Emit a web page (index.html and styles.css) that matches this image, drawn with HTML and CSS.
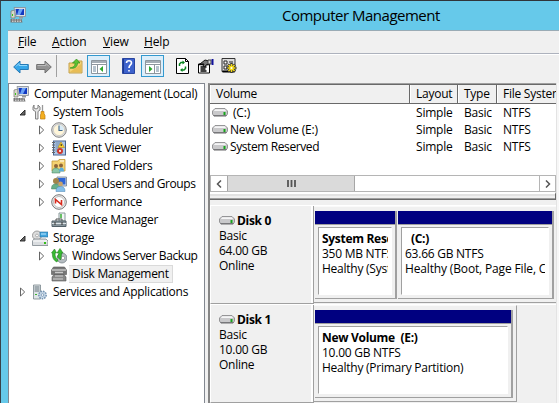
FILE: index.html
```html
<!DOCTYPE html>
<html lang="en">
<head>
<meta charset="utf-8">
<title>Computer Management</title>
<link rel="stylesheet" href="styles.css">
</head>
<body>
<svg class="defs" width="0" height="0">
  <symbol id="computer" viewBox="0 0 16 16">
    <path d="M1 4l4-1v8H1z" fill="#d8d8cc" stroke="#77776f" stroke-width=".7"/>
    <path d="M2 7h1v2H2z" fill="#39c51b"/>
    <path d="M4 .5h11.5v9H6z" fill="#d9dde2" stroke="#858c96" stroke-width=".8"/>
    <path d="M5.5 2H14v6H6.5z" fill="#1238c0"/><path d="M9 2h4l-3 6H7z" fill="#6ba1f5"/>
    <path d="M9 10h4v1.5H9z" fill="#999"/>
    <path d="M.5 12h11l1 3.5H.5z" fill="#777"/><path d="M2 13h9M2 14.5h9" stroke="#ddd" stroke-width=".8" stroke-dasharray="1.5 1"/>
  </symbol>
  <symbol id="tools" viewBox="0 0 16 16">
    <path d="M2 1v3l2 1 2-1V1l2 2v3L6 7.500V15H3.500V7.500L1 6V3z" fill="#e6e6e6" stroke="#777" stroke-width=".9"/>
    <path d="M10.500 1v7" stroke="#999" stroke-width="1.300"/><path d="M9 7.500h3v2l1 2v3.500H8.500V11L9 9.500z" fill="#f4af20" stroke="#bd7d13" stroke-width=".7"/>
  </symbol>
  <symbol id="clock" viewBox="0 0 16 16">
    <circle cx="8" cy="8" r="7.300" fill="#ddd" stroke="#888"/><circle cx="8" cy="8" r="5.600" fill="#fff6da" stroke="#bbb" stroke-width=".6"/>
    <path d="M8 8h5A5 5 0 0 0 8 3z" fill="#d8ebf8"/><path d="M8 3.500V8.500h3.500" fill="none" stroke="#40698f" stroke-width="1.100"/>
  </symbol>
  <symbol id="event" viewBox="0 0 16 16">
    <rect x="2.500" y="1" width="12" height="14" fill="#afc9e9" stroke="#4a6592"/><path d="M4.500 3h5M4.500 5h4M4.500 7h5M4.500 9h3M4.500 11h3" stroke="#506a8b" stroke-width=".7"/>
    <path d="M1 2.500h3M1 5h3M1 7.500h3M1 10h3M1 12.500h3" stroke="#666"/>
    <path d="M10 2l3.500 5.500H7z" fill="#ffd62d" stroke="#b68619" stroke-width=".6"/><path d="M10.200 4v2" stroke="#222"/>
    <circle cx="9" cy="11" r="3" fill="#cf382b"/><circle cx="9" cy="11" r="1.100" fill="#fff"/>
  </symbol>
  <symbol id="shared" viewBox="0 0 16 16">
    <path d="M1 3h6l1-1.500h6V13H1z" fill="#f6d372" stroke="#c39b38" stroke-width=".8"/><path d="M9 3h4" stroke="#fff"/>
    <circle cx="5" cy="8" r="2" fill="#8f6539"/><circle cx="10" cy="7.500" r="2" fill="#8f6539"/>
    <path d="M1 15c0-4 2-5 4-5s4 1 4 5z" fill="#8bc7a7" stroke="#417b5b" stroke-width=".5"/><path d="M8 13.500c0-3 1-4 2.500-4S13 11 13 13.500z" fill="#5bafdd"/>
  </symbol>
  <symbol id="users" viewBox="0 0 16 16">
    <path d="M6 1h9.500v9H6z" fill="#d6dce5" stroke="#707d90" stroke-width=".8"/><path d="M7 2h7.500v6.500H7z" fill="#2e65d6"/>
    <circle cx="5" cy="5" r="3" fill="#a18449"/><path d="M.5 13C.5 9 2 8 5 8s4 1 4 5z" fill="#68af8a" stroke="#447d60" stroke-width=".5"/>
    <circle cx="9.500" cy="8" r="2.400" fill="#c9a46b"/><path d="M5 15.500c0-4 2-5 4.500-5s4.500 1 4.500 5z" fill="#85bfe8" stroke="#4a82b3" stroke-width=".5"/>
  </symbol>
  <symbol id="perf" viewBox="0 0 16 16">
    <circle cx="8" cy="8" r="7.300" fill="#eee" stroke="#777"/><circle cx="8" cy="8" r="5.500" fill="#fff" stroke="#999" stroke-width=".6"/>
    <path d="M4.500 9.500V5.500l6 5V6" fill="none" stroke="#d72b1d" stroke-width="1.600"/>
  </symbol>
  <symbol id="device" viewBox="0 0 16 16">
    <path d="M8 1h6v8H8z" fill="#f2f5f6" stroke="#899"/><path d="M10 2v4" stroke="#37ad32" stroke-width="1.500"/>
    <path d="M5 9V7h6v2" fill="none" stroke="#555"/><path d="M1 9h14v5.500H1z" fill="#87949b" stroke="#526068"/><path d="M1 11.500h14" stroke="#dce3e6"/><path d="M4 10v3M11 10v3" stroke="#333"/>
  </symbol>
  <symbol id="storage" viewBox="0 0 16 16">
    <circle cx="5" cy="5.500" r="4.500" fill="#ddd" stroke="#888" stroke-width=".8"/><circle cx="5" cy="5.500" r="1.400" fill="#fff" stroke="#888" stroke-width=".6"/>
    <path d="M8 2h8v5H8z" fill="#42a6df" stroke="#286f9d" stroke-width=".6"/><path d="M9 4h5" stroke="#bce6ff"/>
    <path d="M2 9h12l2 2v4.500H.5V11z" fill="#d9dcdf" stroke="#7e858b" stroke-width=".8"/><path d="M1 11h14" stroke="#fff"/><path d="M12 12h2v2h-2z" fill="#35bd1a"/>
  </symbol>
  <symbol id="backup" viewBox="0 0 16 16">
    <circle cx="11" cy="10" r="5" fill="#b6bdc2" stroke="#6f7a80" stroke-width=".7"/><circle cx="12" cy="10" r="1.700" fill="#fff" stroke="#777" stroke-width=".5"/>
    <path d="M.5 5L3.500 1l2 4H4c0 4 1 6 3 7l-1 2C2.500 12.500 1 9 1.500 5zM6 5l3-4.500L12 5h-1.500c0 3-.5 5-1 7L6.500 9 8 5z" fill="#38bc32" stroke="#218020" stroke-width=".6"/>
  </symbol>
  <symbol id="diskmgmt" viewBox="0 0 16 16">
    <path d="M2.500 1h11l2 3v4.500H.5V4z" fill="#777" stroke="#555" stroke-width=".6"/><path d="M1 4h14" stroke="#eee"/><path d="M4 6.500h8" stroke="#ccc" stroke-width="1.400"/>
    <path d="M3 8.500h10l2 2.500v4H1v-4z" fill="#888" stroke="#555" stroke-width=".6"/><path d="M4 10h8M2 13h10" stroke="#ddd" stroke-width=".9"/>
  </symbol>
  <symbol id="services" viewBox="0 0 16 16">
    <path d="M1.500 1h7v14h-7z" fill="#dfe5e8" stroke="#79858b" stroke-width=".8"/><path d="M2.500 3h5M2.500 5h5M2.500 7h5" stroke="#65737b"/><path d="M3 10h2v1H3z" fill="#3ab52e"/>
    <circle cx="10.500" cy="11" r="3.700" fill="#c6d7e7" stroke="#7594b2" stroke-width="1.500" stroke-dasharray="1.500 1"/><circle cx="10.500" cy="11" r="1.300" fill="#fff" stroke="#678aaa" stroke-width=".7"/>
  </symbol>
  <symbol id="drive" viewBox="0 0 16 9">
    <path d="M3 .5h10l2.500 2.500v3L14 8.200H2L.5 6V3z" fill="#c9c9cb" stroke="#8c8c8e" stroke-width=".9"/><path d="M3.300 1.200h9.400l1.500 1.800H1.800z" fill="#f5f5f6"/><path d="M1.500 7.500h13" stroke="#77777a"/><path d="M11.500 4h2v3h-2z" fill="#16a51b"/>
  </symbol>
  <symbol id="closed" viewBox="0 0 6 10"><path d="M1 1L5.200 5 1 9z" fill="#fff" stroke="#555" stroke-width=".9"/></symbol>
  <symbol id="open" viewBox="0 0 7 7"><path d="M6 1v5H1z" fill="#666" stroke="#222" stroke-width=".9"/></symbol>
</svg>

<div class="window">
  <header class="titlebar">
    <svg class="app-icon"><use href="#computer"/></svg>
    <h1>Computer Management</h1>
  </header>
  <div class="frame">
    <nav class="menubar">
      <span class="m-file"><u>F</u>ile</span><span class="m-action"><u>A</u>ction</span><span class="m-view"><u>V</u>iew</span><span class="m-help"><u>H</u>elp</span>
    </nav>
    <div class="toolbar">
      <svg class="back" width="16" height="14" viewBox="0 0 16 14"><path d="M.7 7L7 1v3.500h8.300v5H7V13z" fill="#35a6e8" stroke="#2579b5"/><path d="M3 6.500L6 3.500v2h8" fill="none" stroke="#8ed7fc"/></svg>
      <svg class="forward" width="16" height="14" viewBox="0 0 16 14"><path d="M15.300 7L9 1v3.500H.7v5H9V13z" fill="#929292" stroke="#707070"/><path d="M1.500 5.500H10v-2l3 3" fill="none" stroke="#bbb"/></svg>
      <i class="separator"></i>
      <svg class="up" width="15" height="16" viewBox="0 0 15 16"><path d="M1 5h5l1-2h7v12H1z" fill="#f4d477" stroke="#c5a14c"/><path d="M2 14L13 6v8z" fill="#e8bc55"/><path d="M2 10c4-1 5-2 5-5H4.500L8.500 1l3.500 4H9.500c0 4-3 6-7.500 5z" fill="#5ec233" stroke="#34901c" stroke-width=".7"/></svg>
      <span class="toggle t1"><svg width="16" height="14" viewBox="0 0 16 14"><path d="M.5.500h15v13H.5z" fill="#fff" stroke="#8d969e"/><path d="M1 2h14" stroke="#a4adb5" stroke-width="2"/><path d="M1 4.500h14M6.500 4v9" stroke="#8d969e"/><path d="M2 7h3M2 9h3M2 11h3" stroke="#6d879c"/><path d="M12 6v6L8.500 9z" fill="#2ba72c"/></svg></span>
      <svg class="help" width="13" height="16" viewBox="0 0 13 16"><path d="M.5.500h12v15H.5z" fill="#3d62cc" stroke="#2845a0"/><path d="M1.500 1v14" stroke="#1d398e"/><path d="M4.500 5c0-3 5-3 5 0 0 2-2.500 2-2.500 5M7 12v1.500" fill="none" stroke="#fff" stroke-width="1.600"/></svg>
      <span class="toggle t2"><svg width="16" height="14" viewBox="0 0 16 14"><path d="M.5.500h15v13H.5z" fill="#fff" stroke="#8d969e"/><path d="M1 2h14" stroke="#a4adb5" stroke-width="2"/><path d="M1 4.500h14M9.500 4v9" stroke="#8d969e"/><path d="M11 7h3M11 9h3M11 11h3" stroke="#6d879c"/><path d="M4 6v6L7.500 9z" fill="#2ba72c"/></svg></span>
      <svg class="refresh" width="13" height="16" viewBox="0 0 13 16"><path d="M.5.500h9l3 3v12H.5z" fill="#fff" stroke="#000"/><path d="M9.500.500v3h3" fill="none" stroke="#000"/><path d="M3.500 8V6l1.500-1.500h3M9.500 8.500v2L8 12H5" fill="none" stroke="#0a8520" stroke-width="1.500"/><path d="M6.500 2.500v4L9 4.500zM6.500 10v4L4 12z" fill="#0a8520"/></svg>
      <svg class="props" width="16" height="16" viewBox="0 0 16 16"><path d="M.5 6h11v9H.5z" fill="#fff" stroke="#000"/><path d="M1 6.500h10M2.500 9h6M2.500 11h5M2.500 13h6" stroke="#000" stroke-width="1.300"/><path d="M2 6l5-4 4 1 1 3-4 1-1 2-2-1 1-2z" fill="#777" stroke="#111"/><path d="M10 2h3v4h-3z" fill="#ddd" stroke="#444"/><path d="M13.500 1h2v6h-2z" fill="#11119c"/></svg>
      <svg class="settings" width="17" height="16" viewBox="0 0 17 16"><path d="M1 .5h13v13H1z" fill="#ddd" stroke="#333"/><path d="M1.500 13.500h12" stroke="#000" stroke-width="2"/><path d="M3 3h3v3H3zM3 8h3v3H3zM8 4h4" fill="#fff" stroke="#222"/><path d="M10.500 5v10M5.500 10h10M7 6.500l7 7M14 6.500l-7 7" stroke="#333" stroke-width="2.500"/><path d="M10.500 6v8M6.500 10h8M7.500 7l6 6M13.500 7l-6 6" stroke="#f5db18" stroke-width="1.500"/><circle cx="10.500" cy="10" r="1" fill="#fff"/></svg>
    </div>
    <main class="content">
      <aside class="tree">
        <div class="node root"><svg class="ico"><use href="#computer"/></svg><span>Computer Management (Local)</span></div>
        <div class="node l1"><svg class="open"><use href="#open"/></svg><svg class="ico"><use href="#tools"/></svg><span>System Tools</span></div>
        <div class="node l2"><svg class="closed"><use href="#closed"/></svg><svg class="ico"><use href="#clock"/></svg><span>Task Scheduler</span></div>
        <div class="node l2"><svg class="closed"><use href="#closed"/></svg><svg class="ico"><use href="#event"/></svg><span>Event Viewer</span></div>
        <div class="node l2"><svg class="closed"><use href="#closed"/></svg><svg class="ico"><use href="#shared"/></svg><span>Shared Folders</span></div>
        <div class="node l2"><svg class="closed"><use href="#closed"/></svg><svg class="ico"><use href="#users"/></svg><span class="tight">Local Users and Groups</span></div>
        <div class="node l2"><svg class="closed"><use href="#closed"/></svg><svg class="ico"><use href="#perf"/></svg><span>Performance</span></div>
        <div class="node l2 leaf"><svg class="ico"><use href="#device"/></svg><span>Device Manager</span></div>
        <div class="node l1"><svg class="open"><use href="#open"/></svg><svg class="ico"><use href="#storage"/></svg><span>Storage</span></div>
        <div class="node l2"><svg class="closed"><use href="#closed"/></svg><svg class="ico"><use href="#backup"/></svg><span class="tight">Windows Server Backup</span></div>
        <div class="node l2 leaf selected"><svg class="ico"><use href="#diskmgmt"/></svg><span>Disk Management</span></div>
        <div class="node l1"><svg class="closed"><use href="#closed"/></svg><svg class="ico"><use href="#services"/></svg><span>Services and Applications</span></div>
      </aside>
      <section class="details">
        <div class="volumes">
          <div class="vrow head"><span>Volume</span><span>Layout</span><span>Type</span><span>File System</span></div>
          <div class="vrow"><span><svg class="drive"><use href="#drive"/></svg><b class="indent">(C:)</b></span><span>Simple</span><span>Basic</span><span>NTFS</span></div>
          <div class="vrow"><span><svg class="drive"><use href="#drive"/></svg><b>New Volume (E:)</b></span><span>Simple</span><span>Basic</span><span>NTFS</span></div>
          <div class="vrow"><span><svg class="drive"><use href="#drive"/></svg><b class="tight">System Reserved</b></span><span>Simple</span><span>Basic</span><span>NTFS</span></div>
          <div class="scrollbar">
            <i class="sbtn"><svg width="6" height="8" viewBox="0 0 6 8"><path d="M5 .5L1.500 4 5 7.500" fill="none" stroke="#555" stroke-width="1.500"/></svg></i>
            <i class="thumb"><svg width="9" height="7" viewBox="0 0 9 7"><path d="M1 0v7M4.500 0v7M8 0v7" stroke="#555" stroke-width="1.800"/></svg></i>
            <i class="track"></i>
            <i class="sbtn end"><svg width="6" height="8" viewBox="0 0 6 8"><path d="M1 .5L4.500 4 1 7.500" fill="none" stroke="#555" stroke-width="1.500"/></svg></i>
          </div>
        </div>
        <div class="splitter"></div>
        <div class="disks">
          <div class="disk">
            <div class="label"><div class="dname"><svg class="drive"><use href="#drive"/></svg><strong>Disk 0</strong></div><div>Basic</div><div>64.00 GB</div><div>Online</div></div>
            <div class="parts">
              <div class="part reserved-part"><div class="bar"></div><div class="box"><strong>System Rese</strong><span>350 MB NTFS</span><span>Healthy (Syst</span></div></div>
              <div class="part c-part"><div class="bar"></div><div class="box"><strong class="indent2">(C:)</strong><span>63.66 GB NTFS</span><span class="wide">Healthy (Boot, Page File, C</span></div></div>
            </div>
          </div>
          <div class="disk">
            <div class="label"><div class="dname"><svg class="drive"><use href="#drive"/></svg><strong>Disk 1</strong></div><div>Basic</div><div>10.00 GB</div><div>Online</div></div>
            <div class="parts short">
              <div class="part e-part"><div class="bar"></div><div class="box"><strong>New Volume&nbsp; (E:)</strong><span>10.00 GB NTFS</span><span>Healthy (Primary Partition)</span></div></div>
            </div>
          </div>
        </div>
      </section>
      <div class="edge"></div>
    </main>
  </div>
</div>
</body>
</html>
```
FILE: styles.css
```css
* { box-sizing: border-box; }
body { margin: 0; overflow: hidden; font: 12px/18px "Open Sans", "Noto Sans", sans-serif; letter-spacing: -.25px; color: #000; white-space: nowrap; }
svg { display: block; flex: none; }
.defs { position: absolute; }
i { font-style: normal; }
.window { width: 559px; height: 403px; background: #66c9ea; border-top: 1px solid #30343a; border-left: 1px solid #38424a; overflow: hidden; }
.titlebar { height: 29px; display: flex; }
.app-icon { width: 16px; height: 16px; margin: 6px 0 0 9px; }
h1 { margin: 3px 0 0 256px; font-size: 15px; line-height: 22px; font-weight: 400; letter-spacing: -.5px; }
.frame { margin-left: 7px; border-top: 1px solid #9aabb5; background: #f0f0f0; height: 373px; display: flex; flex-direction: column; }
.menubar { height: 23px; padding: 2px 0 0 10px; display: flex; border-bottom: 1px solid #adb2bd; flex: none; letter-spacing: -.15px; }
.menubar u { text-underline-offset: 1px; text-decoration-thickness: 1px; }
.m-file { width: 34px; }
.m-action { width: 51px; }
.m-view { width: 41px; }
.toolbar { height: 29px; border-top: 1px solid #fff; display: flex; flex: none; padding-left: 5px; }
.toolbar > svg { margin-top: 3px; }
.toolbar .back, .toolbar .forward { margin-top: 5px; }
.forward { margin-left: 7px; }
.separator { width: 1px; height: 22px; background: #a0a0a0; margin-left: 4px; }
.up { margin-left: 11px; }
.toggle { width: 23px; height: 22px; border: 1px solid #3399cf; background: #dceefa; padding: 4px 0 0 3px; flex: none; }
.t1 { margin-left: 4px; }
.help { margin-left: 12px; }
.t2 { margin-left: 6px; }
.refresh { margin-left: 12px; }
.props { margin-left: 9px; }
.settings { margin-left: 7px; }
.content { flex: 1; min-height: 0; display: flex; }
.tree { width: 197px; background: #fff; border: 1px solid #828790; border-bottom: 0; padding-top: 1px; flex: none; margin-right: 3px; overflow: hidden; }
.node { height: 18px; display: flex; align-items: center; padding-left: 4px; }
.node span { height: 18px; line-height: 18px; padding: 0 3px; margin-left: 2px; }
.root span { letter-spacing: -.36px; }
.node .tight { letter-spacing: -.42px; }
.vrow .tight { letter-spacing: -.4px; }
.ico { width: 16px; height: 16px; }
.l1 { padding-left: 10px; }
.l2 { padding-left: 29px; }
.open { width: 7px; height: 7px; margin-right: 6px; }
.closed { width: 7px; height: 10px; margin-right: 6px; }
.leaf { padding-left: 42px; }
.selected span { background: #f0f0f0; border: 1px solid #dadada; border-left: 0; line-height: 16px; }
.selected span { letter-spacing: -.3px; }
.details { width: 348px; border-left: 2px solid #858585; border-top: 1px solid #a0a0a0; display: flex; flex-direction: column; flex: none; }
.volumes { height: 108px; border-top: 1px solid #696969; background: #fff; flex: none; letter-spacing: -.2px; }
.vrow { height: 17px; display: grid; grid-template-columns: 200px 48px 39px 1fr; line-height: 17px; }
.vrow span { padding-left: 6px; overflow: hidden; display: flex; align-items: center; }
.vrow span:first-child { padding-left: 2px; }
.vrow b { font-weight: 400; margin-left: 2px; }
.vrow .indent { margin-left: 5px; }
.drive { width: 16px; height: 9px; }
.vrow.head { height: 19px; line-height: 18px; background: #f0f0f0; border-bottom: 1px solid #696969; letter-spacing: -.25px; }
.head span { border-right: 1px solid #696969; border-left: 1px solid #fff; padding-left: 5px; }
.head span:first-child { padding-left: 5px; }
.head span:last-child { border-right: 0; padding-left: 5px; }
.scrollbar { height: 17px; margin-top: 20px; display: flex; border: 1px solid #b5b5b5; background: #fff; }
.scrollbar i { display: flex; align-items: center; justify-content: center; }
.sbtn { width: 16px; }
.thumb { width: 128px; background: #dadada; border: solid #a6a6a6; border-width: 0 1px; }
.track { flex: 1; }
.end { border-left: 1px solid #b5b5b5; }
.splitter { height: 8px; background: #f0f0f0; border: solid #696969; border-width: 0 1px 1px 0; border-top: 2px solid #fff; box-shadow: inset 0 -1px #a0a0a0, inset 0 2px #e2e2e2; flex: none; }
.disks { padding-top: 5px; flex: 1; min-height: 0; overflow: hidden; background: #f0f0f0; line-height: 15px; }
.disk { display: flex; height: 99px; border-top: 1px solid #fff; }
.label { width: 104px; border-left: 1px solid #fff; border-bottom: 1px solid #a0a0a0; padding: 7px 0 0 8px; box-shadow: inset -1px 0 #a0a0a0, inset -3px 0 #fff; }
.dname { display: flex; align-items: center; }
.dname strong { margin-left: 2px; }
strong { letter-spacing: -.3px; }
.parts { flex: 1; display: flex; padding: 4px 2px 3px 1px; gap: 1px; border-top: 1px solid #fafafa; border-bottom: 1px solid #a0a0a0; margin-bottom: 1px; }
.part { border-right: 2px solid #a0a0a0; border-bottom: 1px solid #a0a0a0; min-width: 0; display: flex; flex-direction: column; flex: none; }
.bar { height: 14px; background: #000080; border-bottom: 1px solid #a0a0a0; flex: none; }
.box { margin: 2px 3px 3px; flex: 1; background: #fff; border: 1px solid #a0a0a0; border-right-color: #fff; border-bottom-color: #fff; padding: 3px 3px 0; }
.box > * { display: block; overflow: hidden; }
.reserved-part { width: 82px; }
.c-part { width: 156px; }
.wide { letter-spacing: -.15px; }
.box .indent2 { padding-left: 6px; }
.short { flex: none; width: 203px; border-right: 1px solid #a0a0a0; }
.e-part { width: 198px; }
.edge { flex: 1; border-left: 1px solid #e3e3e3; background: #f7f7f7; }
```
